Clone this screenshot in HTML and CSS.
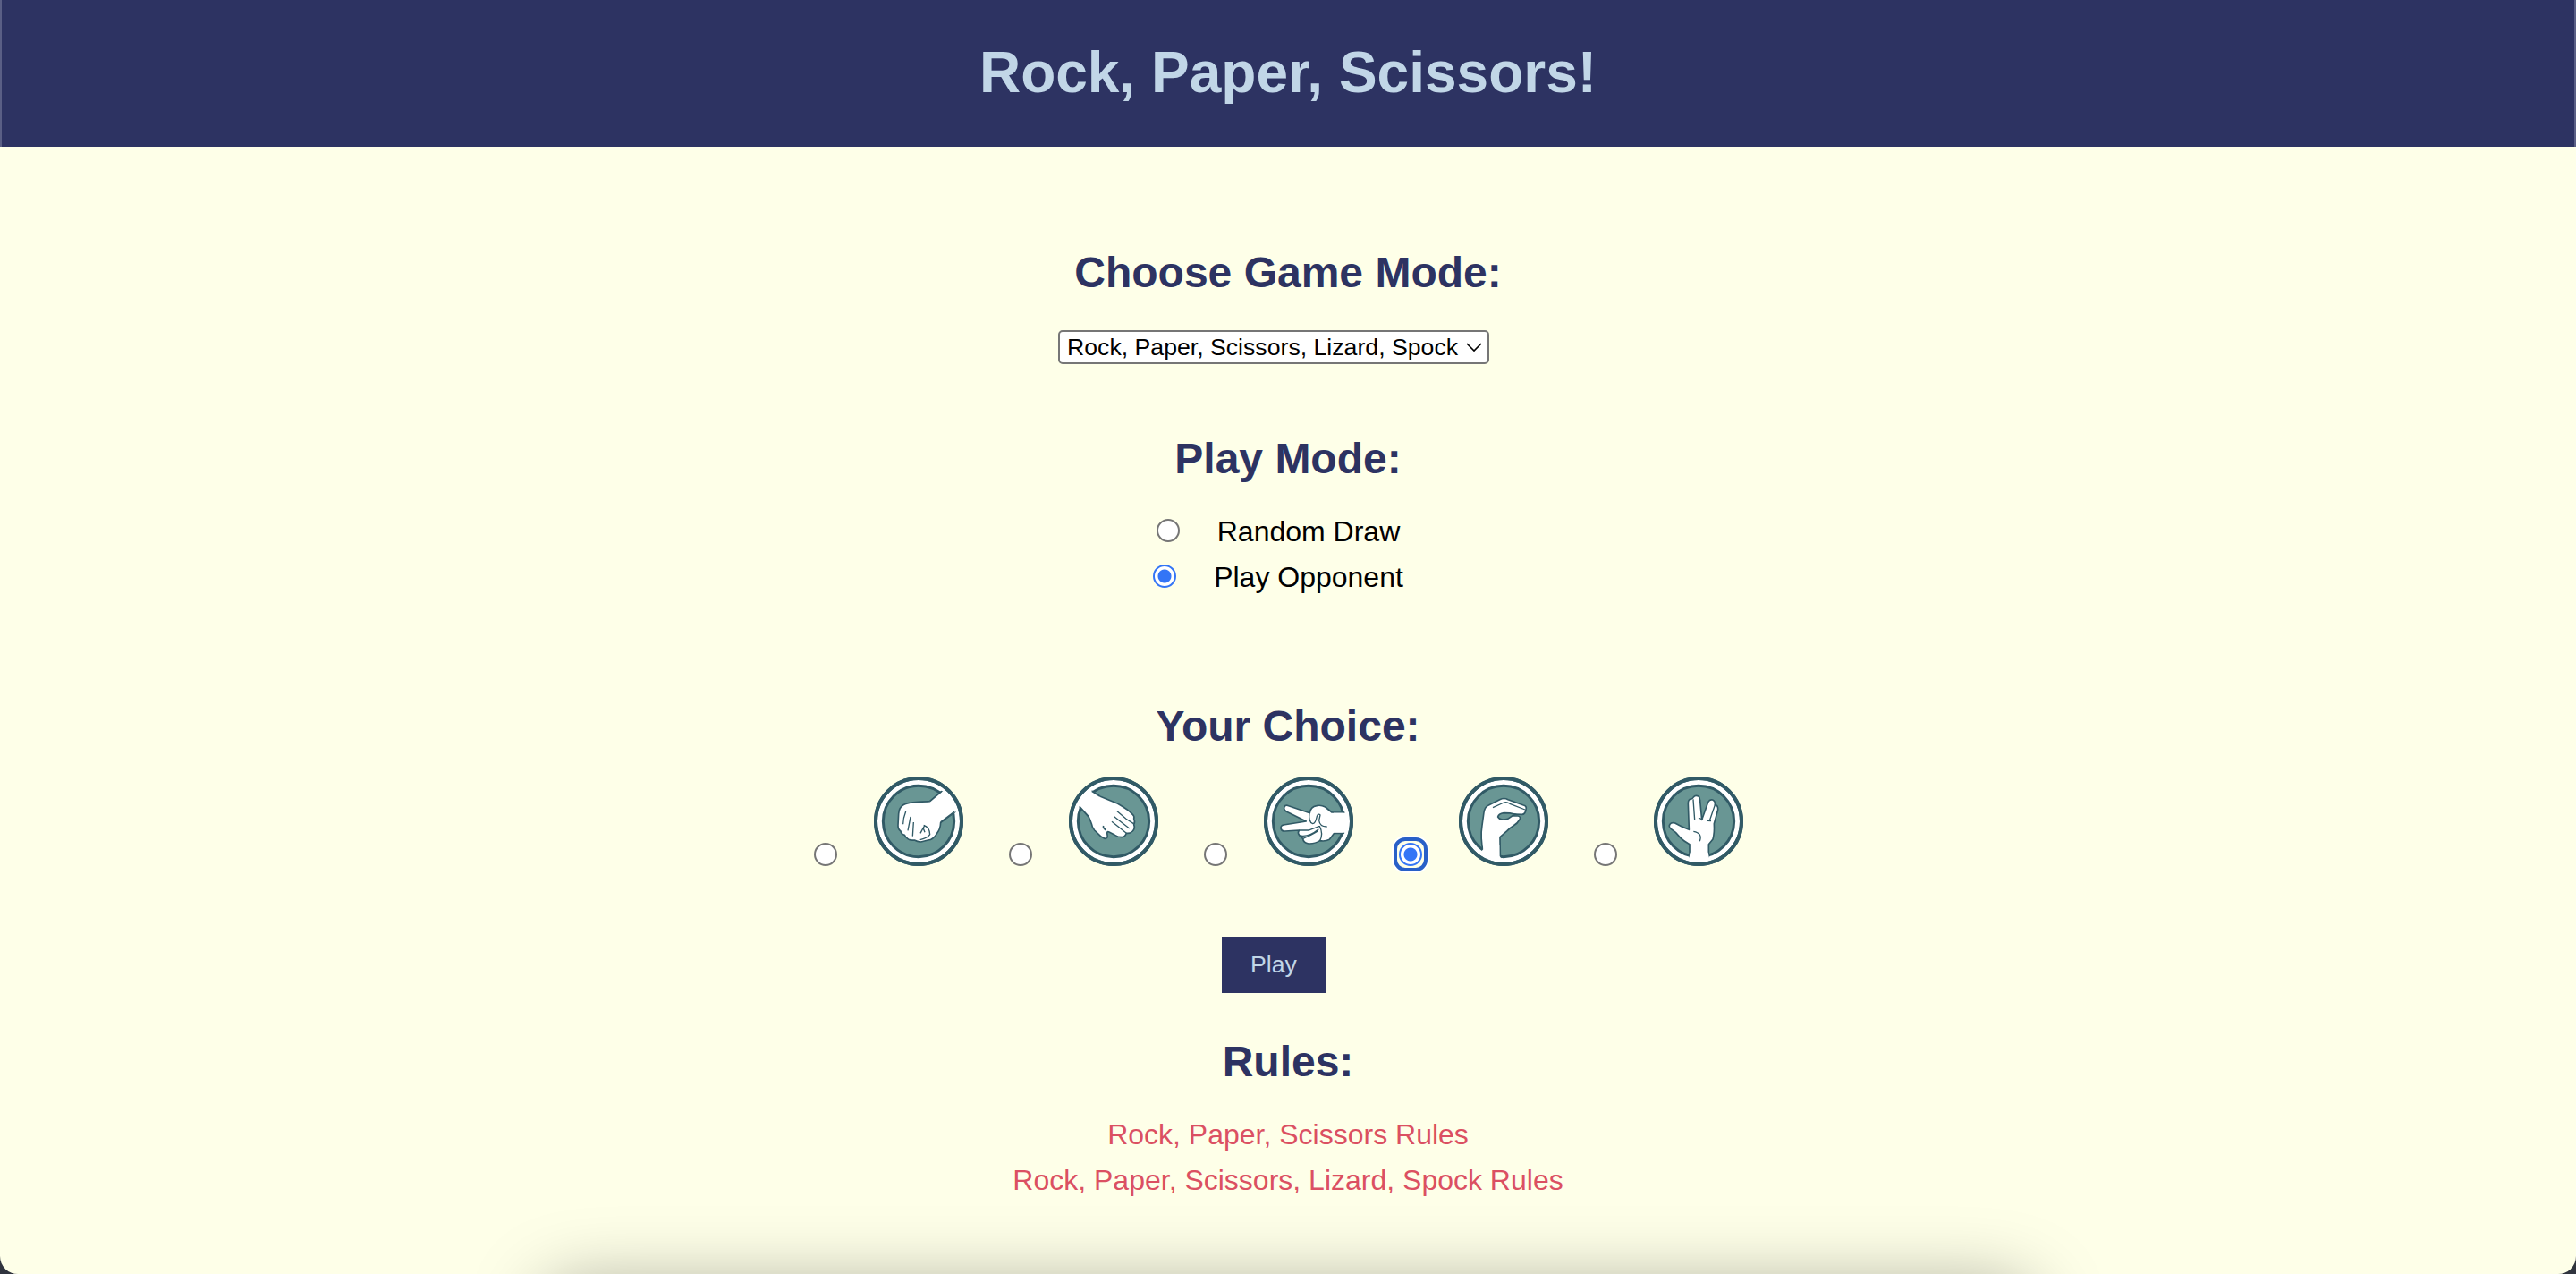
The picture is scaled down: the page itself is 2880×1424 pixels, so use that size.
FILE: index.html
```html
<!DOCTYPE html>
<html lang="en">
<head>
<meta charset="utf-8">
<title>Rock, Paper, Scissors!</title>
<link rel="stylesheet" href="styles.css">
</head>
<body>
<div class="page">
  <header class="banner"><h1>Rock, Paper, Scissors!</h1></header>
  <main>
    <form class="game">
      <section class="mode">
        <h2><label for="mode">Choose Game Mode:</label></h2>
        <div class="select-wrap">
          <select id="mode" class="select">
            <option>Rock, Paper, Scissors</option>
            <option selected>Rock, Paper, Scissors, Lizard, Spock</option>
          </select>
          <svg class="chevron" viewBox="0 0 18 12" aria-hidden="true"><path d="M1 2l8 8 8-8"/></svg>
        </div>
      </section>

      <section class="play-mode">
        <h2>Play Mode:</h2>
        <label class="option"><input class="radio" type="radio" name="play">Random Draw</label>
        <label class="option"><input class="radio" type="radio" name="play" checked>Play Opponent</label>
      </section>

      <section class="choice">
        <h2>Your Choice:</h2>
        <div class="hands">
          <label class="hand"><input class="radio" type="radio" name="hand" aria-label="Rock">
            <svg class="badge" viewBox="0 0 300 300" aria-hidden="true">
              <circle class="rim" cx="150" cy="150" r="144"/><circle class="disc" cx="150" cy="150" r="119"/>
              <path class="skin" d="M188 83L227 50Q262 76 272 119L224 154Q223 177 212 190Q199 212 182 213L158 219Q145 218 136 213Q122 215 114 209Q105 203 103 196Q91 193 90 183Q80 177 81 162L83 125Q85 105 94 99Q104 87 148 85Q177 84 188 83Z"/>
              <path class="patch" d="M188 83L227 51L245 50L277 98L272 119L224 152Z"/>
              <path class="ink" d="M188 83L227 50M270 118L224 153"/>
              <path class="crease" d="M107 117Q98 140 98 160M123 135L114 181M133 153L130 200M156 190Q164 174 171 163M166 174L171 187M167 163Q187 170 188 194Q182 205 155 212"/>
              <circle class="edge" cx="150" cy="150" r="144"/>
            </svg></label>
          <label class="hand"><input class="radio" type="radio" name="hand" aria-label="Paper">
            <svg class="badge" viewBox="0 0 300 300" aria-hidden="true">
              <circle class="rim" cx="150" cy="150" r="144"/><circle class="disc" cx="150" cy="150" r="119"/>
              <path class="skin" d="M78 49L104 66L164 91Q202 113 214 127Q221 133 218 142Q223 150 218 161Q223 174 214 183Q204 192 193 190Q189 202 178 203Q165 203 154 196L135 186Q126 182 129 195Q132 208 120 208L109 202L86 180Q78 172 76 158Q71 144 66 134L37 101Z"/>
              <path class="patch" d="M78 49L65 40L30 88L37 101L66 131L104 66Z"/>
              <path class="ink" d="M77 49L104 66M36 101L66 134M116 165Q113 172 125 180"/>
              <path class="crease" d="M162 116L192 142L217 158M152 134L203 174M144 151L193 190"/>
              <circle class="edge" cx="150" cy="150" r="144"/>
            </svg></label>
          <label class="hand"><input class="radio" type="radio" name="hand" aria-label="Scissors">
            <svg class="badge" viewBox="0 0 300 300" aria-hidden="true">
              <circle class="rim" cx="150" cy="150" r="144"/><circle class="disc" cx="150" cy="150" r="119"/>
              <path class="skin" d="M269 120H228L206 102Q190 94 177 98Q157 101 154 122L83 98Q72 94 69 102Q65 110 75 117L142 150L66 162Q56 164 57 174Q59 184 71 183L118 180Q112 189 119 197Q127 206 131 208Q132 222 150 225Q171 226 188 215Q206 218 220 211L236 190H268Z"/>
              <path class="patch" d="M234 122H280V188H234Z"/>
              <path class="crease" d="M153 120Q149 153 164 158Q173 158 178 133Q183 122 189 129L185 147Q188 169 212 168M118 180H150L187 166M131 208Q153 200 181 183M187 166Q200 192 188 215M121 198Q150 204 184 176"/>
              <circle class="edge" cx="150" cy="150" r="144"/>
            </svg></label>
          <label class="hand"><input class="radio focused" type="radio" name="hand" checked aria-label="Lizard">
            <svg class="badge" viewBox="0 0 300 300" aria-hidden="true">
              <circle class="rim" cx="150" cy="150" r="144"/><circle class="disc" cx="150" cy="150" r="119"/>
              <path class="skin" d="M82 256Q71 205 78 163L84 120Q87 101 100 96L137 77Q152 70 165 77L217 96Q229 99 225 111Q222 128 211 127L187 126Q181 130 184 132L198 132Q209 134 204 144Q197 157 183 165Q171 172 162 182L138 203L139 274Z"/>
              <path class="patch" d="M82 244L72 254Q91 270 110 282H148L136 266V230H82Z"/>
              <path class="leaf" d="M131 135Q133 125 151 122Q173 122 188 126Q180 131 164 142Q139 149 131 135Z"/>
              <path class="crease" d="M114 104L151 87Q161 83 171 91L222 111"/>
              <circle class="edge" cx="150" cy="150" r="144"/>
            </svg></label>
          <label class="hand"><input class="radio" type="radio" name="hand" aria-label="Spock">
            <svg class="badge" viewBox="0 0 300 300" aria-hidden="true">
              <circle class="rim" cx="150" cy="150" r="144"/><circle class="disc" cx="150" cy="150" r="119"/>
              <path class="skin" d="M120 270V227Q100 216 89 205L73 187L58 176Q48 167 54 160Q59 153 71 156Q92 168 118 178L115 90Q115 75 126 75Q131 73 133 69Q139 61 150 66Q155 70 155 80L161 145L182 86Q188 75 197 78Q207 82 205 95Q216 96 215 111L202 158Q204 188 198 210L184 227V270Z"/>
              <path class="patch" d="M122 254H182L186 274L152 284L118 274Z"/>
              <path class="crease" d="M132 76L137 145M150 138L165 145M205 95L188 145M180 148L192 149M133 184Q164 189 154 217"/>
              <circle class="edge" cx="150" cy="150" r="144"/>
            </svg></label>
        </div>
      </section>

      <button class="play" type="button">Play</button>
    </form>

    <section class="rules">
      <h2>Rules:</h2>
      <a href="#rps">Rock, Paper, Scissors Rules</a>
      <a href="#rpsls">Rock, Paper, Scissors, Lizard, Spock Rules</a>
    </section>
  </main>
  <div class="dock-shadow"></div>
</div>
</body>
</html>
```
FILE: styles.css
```css
* { box-sizing: border-box; }

body {
  margin: 0;
  background: #30343e;
  color: #000;
  font: 32px/51px "Liberation Sans", Arial, sans-serif;
}

.page {
  position: relative;
  min-height: 100vh;
  overflow: hidden;
  background: #feffe8;
  border-radius: 0 0 20px 20px;
}

.banner {
  padding: 39px 40px 41px;
  background: #2d3362;
  border: 2px solid #5a5f85;
  border-width: 0 2px;
  text-align: center;
}

h1 {
  margin: 0;
  color: #c1d6e7;
  font-size: 64px;
  line-height: 84px;
}

h2 {
  margin: 0 0 24px;
  color: #2d3362;
  font-size: 48px;
  line-height: 64px;
}

main {
  padding-top: 109px;
}

.game,
.mode,
.play-mode,
.choice,
.rules {
  display: flex;
  flex-direction: column;
  align-items: center;
}

.select-wrap {
  position: relative;
  display: flex;
  margin: 8px 32px 0 0;
}

.select {
  appearance: none;
  width: 482px;
  height: 38px;
  margin: 0;
  padding: 0 8px;
  border: 2px solid #767676;
  border-radius: 5px;
  background: #fff;
  color: #000;
  font-family: inherit;
  font-size: smaller;
}

.chevron {
  position: absolute;
  top: 13px;
  right: 8px;
  width: 18px;
  height: 12px;
  fill: none;
  stroke: #000;
  stroke-width: 1.6;
  pointer-events: none;
}

.play-mode {
  margin-top: 74px;
}

.option {
  display: flex;
  align-items: center;
  gap: 42px;
  margin-right: 22px;
}

.option .radio {
  margin-bottom: 4px;
}

.radio {
  appearance: none;
  flex: none;
  width: 26px;
  height: 26px;
  margin: 0;
  border: 2px solid #767676;
  border-radius: 50%;
  background: #fff;
}

.radio:checked {
  border-color: #3375f6;
  background: radial-gradient(circle, #3375f6 7px, #fff 8px);
}

.focused {
  position: relative;
}

.focused::after {
  content: "";
  position: absolute;
  inset: -8px;
  border: 4px solid #2860c8;
  border-radius: 13px;
  box-shadow: 0 0 0 2px #fff;
}

.choice {
  margin-top: 109px;
}

.hands {
  display: flex;
  gap: 51px;
  margin-right: 22px;
}

.hand {
  display: flex;
  align-items: flex-end;
  gap: 41px;
}

.badge {
  display: block;
  width: 100px;
  height: 100px;
}

.rim { fill: #fff; stroke: #315a66; stroke-width: 12; }
.edge { fill: none; stroke: #315a66; stroke-width: 12; }
.disc { fill: #699694; stroke: #315a66; stroke-width: 9; }
.skin { fill: #fff; stroke: #315a66; stroke-width: 5; stroke-linejoin: round; }
.patch { fill: #fff; }
.leaf { fill: #699694; stroke: #315a66; stroke-width: 5; }
.ink { fill: none; stroke: #315a66; stroke-width: 5; }
.crease { fill: none; stroke: #315a66; stroke-width: 4; }

.play {
  width: 116px;
  height: 63px;
  margin: 79px 32px 0 0;
  border: 0;
  background: #2d3362;
  color: #c1d6e7;
  font-family: inherit;
  font-size: smaller;
}

.rules {
  margin-top: 45px;
}

.rules a {
  color: #db5062;
  text-decoration: none;
}

.dock-shadow {
  position: absolute;
  top: 100%;
  left: 21%;
  right: 21%;
  height: 100px;
  margin-top: 12px;
  border-radius: 40px;
  box-shadow: 0 0 80px rgba(0, 0, 0, 0.34);
}
```
